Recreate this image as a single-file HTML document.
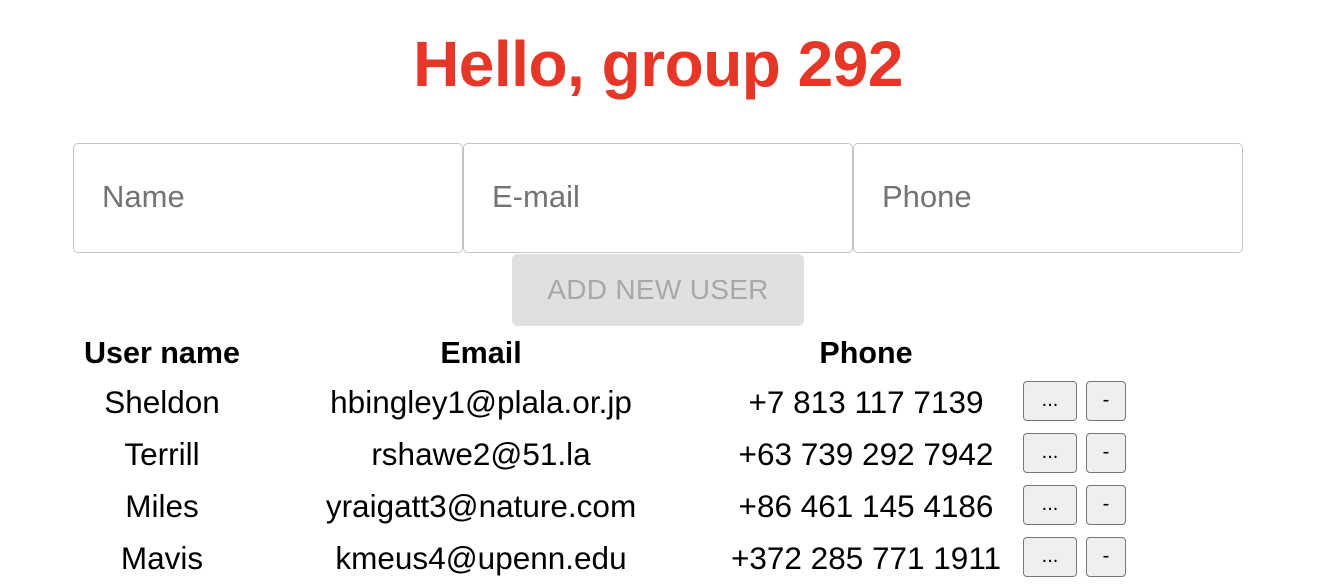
<!DOCTYPE html><html><head><style>
body{margin:0;width:1320px;height:588px;overflow:hidden;background:#fff;font-family:"Liberation Sans",sans-serif;position:relative}
h1{position:absolute;left:0;width:1316px;top:24px;margin:0;text-align:center;color:#e53627;font-size:64px;font-weight:bold;line-height:80px;letter-spacing:-0.5px}
.in{position:absolute;top:143px;border:1.5px solid #c4c4c4;border-radius:5px;box-sizing:border-box;height:110px;font-size:31px;color:#737373;line-height:106px;padding-left:28px}
.btn{position:absolute;left:512px;top:254px;width:292px;height:72px;background:#e0e0e0;border-radius:6px;color:#a8a8a8;font-size:28px;text-align:center;line-height:72px;letter-spacing:0.3px}
.c{position:absolute;transform:translateX(-50%);font-size:31.5px;line-height:36px;white-space:nowrap}
.b{font-weight:bold;font-size:30.5px}
.sb{position:absolute;height:40px;border:1.5px solid #777;border-radius:4px;background:#efefef;box-sizing:border-box;text-align:center;font-size:20px;line-height:36px}
</style></head><body>
<h1>Hello, group 292</h1>
<div class="in" style="left:73px;width:390px">Name</div>
<div class="in" style="left:463px;width:390px">E-mail</div>
<div class="in" style="left:853px;width:390px">Phone</div>
<div class="btn">ADD NEW USER</div>
<div class="c b" style="left:162px;top:335px">User name</div>
<div class="c b" style="left:481px;top:335px">Email</div>
<div class="c b" style="left:866px;top:335px">Phone</div>

<div class="c" style="left:162px;top:384px">Sheldon</div>
<div class="c" style="left:481px;top:384px">hbingley1@plala.or.jp</div>
<div class="c" style="left:866px;top:384px">+7 813 117 7139</div>
<div class="sb" style="left:1023px;top:381px;width:54px">...</div><div class="sb" style="left:1086px;top:381px;width:40px">-</div>

<div class="c" style="left:162px;top:436px">Terrill</div>
<div class="c" style="left:481px;top:436px">rshawe2@51.la</div>
<div class="c" style="left:866px;top:436px">+63 739 292 7942</div>
<div class="sb" style="left:1023px;top:433px;width:54px">...</div><div class="sb" style="left:1086px;top:433px;width:40px">-</div>

<div class="c" style="left:162px;top:488px">Miles</div>
<div class="c" style="left:481px;top:488px">yraigatt3@nature.com</div>
<div class="c" style="left:866px;top:488px">+86 461 145 4186</div>
<div class="sb" style="left:1023px;top:485px;width:54px">...</div><div class="sb" style="left:1086px;top:485px;width:40px">-</div>

<div class="c" style="left:162px;top:540px">Mavis</div>
<div class="c" style="left:481px;top:540px">kmeus4@upenn.edu</div>
<div class="c" style="left:866px;top:540px">+372 285 771 1911</div>
<div class="sb" style="left:1023px;top:537px;width:54px">...</div><div class="sb" style="left:1086px;top:537px;width:40px">-</div>
</body></html>
